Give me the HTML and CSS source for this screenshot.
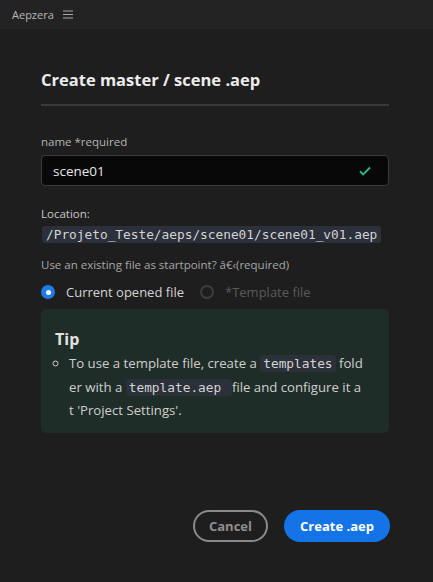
FILE: index.html
```html
<!DOCTYPE html>
<html>
<head>
<meta charset="utf-8">
<link rel="stylesheet" href="styles.css">
</head>
<body>
<div class="topbar">
  <span class="app">Aepzera</span>
  <span class="menu">
    <svg width="10" height="9" viewBox="0 0 10 9"><path d="M0 1h10M0 4.5h10M0 8h10" stroke="#a8a8a8" stroke-width="1.2"/></svg>
  </span>
</div>
<main class="panel">
  <h1 class="title">Create master / scene .aep</h1>
  <div class="divider"></div>
  <label class="label">name *required</label>
  <div class="input">
    <span class="input-text">scene01</span>
    <svg class="check" width="12" height="10" viewBox="0 0 12 10"><path d="M1 5.2l3.2 3.2L11 1.5" fill="none" stroke="#2fb38a" stroke-width="2"/></svg>
  </div>
  <div class="loc-label">Location:</div>
  <code class="path">/Projeto_Teste/aeps/scene01/scene01_v01.aep</code>
  <div class="question">Use an existing file as startpoint? â€&lsaquo;(required)</div>
  <div class="radios">
    <span class="radio on"><span class="dot"></span>Current opened file</span>
    <span class="radio off"><span class="dot"></span>*Template file</span>
  </div>
  <div class="tip">
    <div class="tip-title">Tip</div>
    <ul class="tip-list">
      <li>To use a template file, create a <code class="c">templates</code> fold<br>er with a <code class="c">template.aep </code> file and configure it a<br>t 'Project Settings'.</li>
    </ul>
  </div>
  <div class="actions">
    <button class="btn cancel">Cancel</button>
    <button class="btn primary">Create .aep</button>
  </div>
</main>
</body>
</html>
```
FILE: styles.css
```css
* { box-sizing: border-box; }
body {
  margin: 0;
  background: #1e1e1e;
  font-family: "Open Sans", "Noto Sans", sans-serif;
  color: #d6d6d6;
  width: 433px;
  height: 582px;
  overflow: hidden;
}
.topbar {
  height: 29px;
  background: #232323;
  display: flex;
  align-items: center;
  padding-left: 12px;
  gap: 9px;
}
.app { font-size: 11px; color: #b8b8b8; }
.menu { display: flex; align-items: center; }
.panel {
  margin-left: 41px;
  width: 348px;
  padding-top: 40px;
}
.title {
  margin: 0;
  font-size: 16.5px;
  font-weight: 700;
  color: #ececec;
  line-height: 22px;
}
.divider {
  height: 2px;
  background: #3a3a3a;
  margin-top: 13px;
  margin-bottom: 28px;
}
.label {
  display: block;
  font-size: 11.5px;
  color: #b4b4b4;
  line-height: 16px;
}
.input {
  margin-top: 5px;
  height: 31px;
  background: #080808;
  border: 1px solid #3c3c3c;
  border-radius: 4px;
  display: flex;
  align-items: center;
  justify-content: space-between;
  padding: 0 17px 0 11px;
}
.input-text { font-size: 13.5px; color: #e8e8e8; }
.loc-label {
  margin-top: 20px;
  font-size: 11.5px;
  color: #c8c8c8;
  line-height: 16px;
}
.path {
  display: inline-block;
  margin-top: 3px;
  margin-left: 1px;
  font-family: "DejaVu Sans Mono", monospace;
  font-size: 12.8px;
  line-height: 17px;
  padding: 0 4px;
  background: #2b303b;
  color: #d4d4d4;
  border-radius: 3px;
}
.question {
  margin-top: 13px;
  font-size: 11.5px;
  color: #a8a8a8;
  line-height: 16px;
}
.radios {
  margin-top: 10px;
  display: flex;
  align-items: center;
  gap: 16px;
  font-size: 13px;
  line-height: 18px;
}
.radio { display: flex; align-items: center; gap: 11px; }
.radio.on { color: #d4d4d4; }
.radio.off { color: #5a5a5a; }
.dot {
  width: 14px; height: 14px; border-radius: 50%;
  display: inline-block;
}
.on .dot { background: #1e7be8; position: relative; }
.on .dot::after {
  content: ""; position: absolute; left: 4.5px; top: 4.5px; width: 5px; height: 5px; border-radius: 50%; background: #fff;
}
.off .dot { border: 2px solid #3e3e3e; }
.tip {
  margin-top: 8px;
  background: #1f2d28;
  border-radius: 5px;
  padding: 19px 4px 14px 14px;
  height: 124px;
}
.tip-title {
  font-size: 16px;
  font-weight: 700;
  color: #e2e2e2;
  line-height: 22px;
}
.tip-list {
  margin: 2px 0 0 0;
  padding-left: 14px;
  list-style: circle;
  font-size: 13.2px;
  color: #cfcfcf;
  line-height: 22.5px;
  white-space: nowrap;
}
.c {
  font-family: "DejaVu Sans Mono", monospace;
  font-size: 12.8px;
  background: #2b303b;
  padding: 1px 3px;
  border-radius: 3px;
  color: #d4d4d4;
}
.actions {
  margin-top: 77px;
  display: flex;
  justify-content: flex-end;
  gap: 16px;
}
.btn {
  height: 32px;
  border-radius: 16px;
  font-family: "Open Sans", sans-serif;
  font-weight: 700;
  font-size: 13px;
  padding: 0 10px;
  cursor: pointer;
}
.cancel {
  background: transparent;
  border: 2px solid #8a8a8a;
  color: #8e8e8e;
  width: 75px;
}
.primary {
  background: #1473e6;
  border: none;
  color: #fff;
  width: 106px;
  margin-right: -1px;
}
```
